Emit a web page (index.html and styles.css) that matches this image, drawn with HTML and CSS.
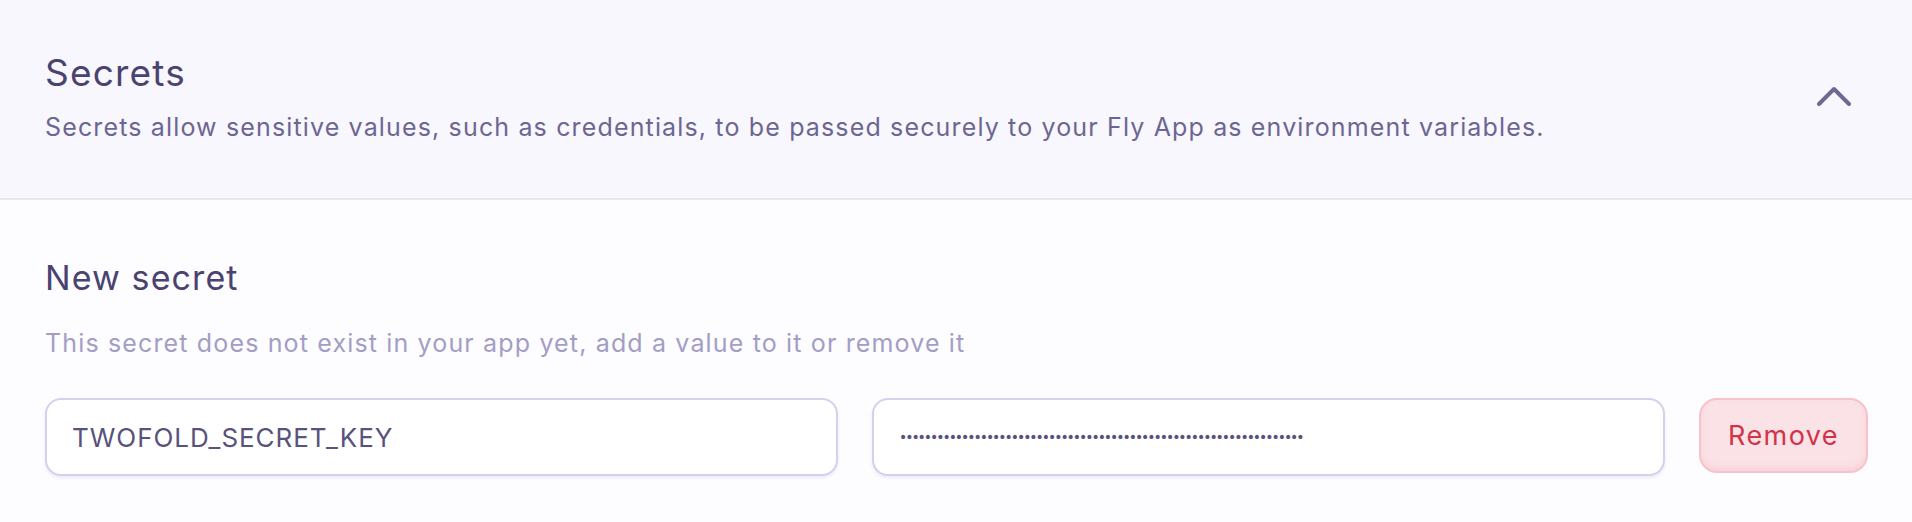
FILE: index.html
```html
<!DOCTYPE html>
<html lang="en">
<head>
<meta charset="utf-8">
<title>Secrets</title>
<link rel="stylesheet" href="styles.css">
</head>
<body>
<section class="panel">
  <header class="panel-head">
    <div class="head-text">
      <h2 class="title">Secrets</h2>
      <p class="desc">Secrets allow sensitive values, such as credentials, to be passed securely to your Fly App as environment variables.</p>
    </div>
    <button class="toggle" aria-label="Collapse">
      <svg width="34" height="20" viewBox="0 0 34 20"><path d="M2 18 L17 3 L32 18" fill="none" stroke="#6f6892" stroke-width="4" stroke-linecap="round" stroke-linejoin="round"/></svg>
    </button>
  </header>
  <div class="panel-body">
    <h3 class="subtitle">New secret</h3>
    <p class="hint">This secret does not exist in your app yet, add a value to it or remove it</p>
    <div class="row">
      <div class="field"><span class="field-text">TWOFOLD_SECRET_KEY</span></div>
      <div class="field"><span class="dots">•••••••••••••••••••••••••••••••••••••••••••••••••••••••••••••••••</span></div>
      <button class="remove">Remove</button>
    </div>
  </div>
</section>
</body>
</html>
```
FILE: styles.css
```css
* { box-sizing: border-box; }
html, body { margin: 0; padding: 0; }
body {
  background: #fdfcff;
  font-family: Inter, "Noto Sans", sans-serif;
  width: 1912px;
  height: 522px;
  overflow: hidden;
}
.panel-head {
  background: #f8f7fd;
  border-bottom: 2px solid #e7e5f1;
  height: 200px;
  padding: 51px 45px 0 45px;
  display: flex;
  justify-content: space-between;
  align-items: flex-start;
}
.title {
  margin: 0;
  font-size: 37px;
  line-height: 44px;
  font-weight: 400;
  color: #4a4370;
  letter-spacing: 1.2px;
}
.desc {
  margin: 14px 0 0 0;
  font-size: 25px;
  line-height: 36px;
  color: #6c6692;
  letter-spacing: 1.15px;
}
.toggle {
  background: none;
  border: 0;
  padding: 0;
  margin: 35px 16px 0 0;
  width: 34px;
  height: 20px;
  display: flex;
}
.panel-body {
  padding: 58px 44px 0 45px;
}
.subtitle {
  margin: 0;
  font-size: 34px;
  line-height: 40px;
  font-weight: 400;
  color: #4a4370;
  letter-spacing: 1.1px;
}
.hint {
  margin: 27px 0 0 0;
  font-size: 25px;
  line-height: 36px;
  color: #a29ec5;
  letter-spacing: 1.15px;
}
.row {
  margin-top: 37px;
  display: flex;
  align-items: flex-start;
  gap: 34px;
}
.field {
  flex: 1;
  height: 78px;
  background: #ffffff;
  border: 2px solid #d5d0eb;
  border-radius: 16px;
  box-shadow: 0 2px 3px rgba(120, 110, 180, 0.12);
  padding: 0 25px;
  display: flex;
  align-items: center;
}
.field-text {
  font-size: 26px;
  color: #58527c;
  letter-spacing: 0.95px;
}
.dots {
  font-family: "DejaVu Sans", sans-serif;
  font-size: 14px;
  letter-spacing: -2.05px;
  color: #58527c;
  line-height: 1;
}
.remove {
  width: 169px;
  height: 75px;
  background: #fbe2e6;
  border: 2px solid #f6c3cb;
  border-radius: 18px;
  box-shadow: inset 0 -3px 6px rgba(240, 160, 175, 0.25);
  font-family: Inter, "Noto Sans", sans-serif;
  font-size: 27px;
  color: #d13349;
  letter-spacing: 1.4px;
  padding: 0;
}
```
